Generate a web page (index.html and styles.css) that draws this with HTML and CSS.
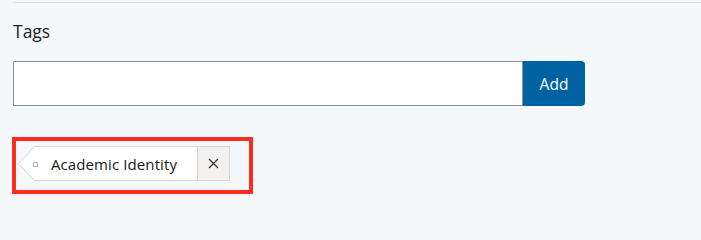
FILE: index.html
```html
<!DOCTYPE html>
<html lang="en">
<head>
<meta charset="utf-8">
<title>Tags</title>
<link rel="stylesheet" href="styles.css">
</head>
<body>
<div class="section">
  <div class="rule"></div>
  <label class="label" for="tag-input">Tags</label>
  <div class="row">
    <input id="tag-input" class="input" type="text">
    <button class="add" type="button">Add</button>
  </div>
  <div class="highlight">
    <div class="tag">
      <svg class="arrow" width="16" height="35" viewBox="0 0 16 35"><polygon points="16.5,0.5 0.6,17.5 16.5,34.5" fill="#ffffff" stroke="#d6d6d6" stroke-width="1"/></svg>
      <span class="hole"></span>
      <span class="tag-text">Academic Identity</span>
      <button class="close" type="button" aria-label="Remove">
        <svg width="11" height="11" viewBox="0 0 11 11"><path d="M1 1 L10 10 M10 1 L1 10" stroke="#333333" stroke-width="1.3" fill="none"/></svg>
      </button>
    </div>
  </div>
</div>
</body>
</html>
```

FILE: styles.css
```css
html, body {
  margin: 0;
  padding: 0;
  background: #f4f8fb;
}
body {
  font-family: "Open Sans", "Noto Sans", sans-serif;
  color: #1b1b1b;
  width: 701px;
  height: 202px;
  overflow: hidden;
}
.section {
  padding: 2px 0 0 13px;
}
.rule {
  border-top: 1px solid #dbe0e4;
}
.label {
  display: block;
  margin-top: 16px;
  font-size: 17.5px;
  line-height: 24px;
  color: #222;
}
.row {
  display: flex;
  margin-top: 18px;
  height: 45px;
}
.input {
  box-sizing: border-box;
  width: 510px;
  height: 45px;
  margin: 0;
  border: 1px solid #8a939a;
  border-radius: 0;
  background: #fff;
  outline: none;
}
.add {
  box-sizing: border-box;
  width: 62px;
  height: 45px;
  margin: 0;
  border: none;
  border-radius: 0 4px 4px 0;
  background: #0062a3;
  color: #fff;
  font-family: "Open Sans", "Noto Sans", sans-serif;
  font-size: 15.5px;
  font-weight: 500;
  padding: 0;
}
.highlight {
  display: inline-flex;
  margin: 31px 0 0 -1px;
  border: 4px solid #ff2b20;
  padding: 5px 19px 9px 2px;
}
.tag {
  position: relative;
  display: flex;
  height: 35px;
}
.arrow {
  display: block;
  flex: none;
}
.hole {
  position: absolute;
  left: 15px;
  top: 16px;
  width: 3px;
  height: 3px;
  border: 1px solid #b4b4b4;
  background: #fff;
}
.tag-text {
  box-sizing: border-box;
  height: 35px;
  display: flex;
  align-items: center;
  padding: 0 20px 0 17px;
  background: #fff;
  border-top: 1px solid #d6d6d6;
  border-bottom: 1px solid #d6d6d6;
  font-size: 15px;
  letter-spacing: 0.1px;
  color: #1b1b1b;
}
.close {
  box-sizing: border-box;
  width: 33px;
  height: 35px;
  margin: 0;
  padding: 0;
  border: 1px solid #d6d6d6;
  background: #f2f1ef;
  display: flex;
  align-items: center;
  justify-content: center;
}
.close svg {
  display: block;
}
```
